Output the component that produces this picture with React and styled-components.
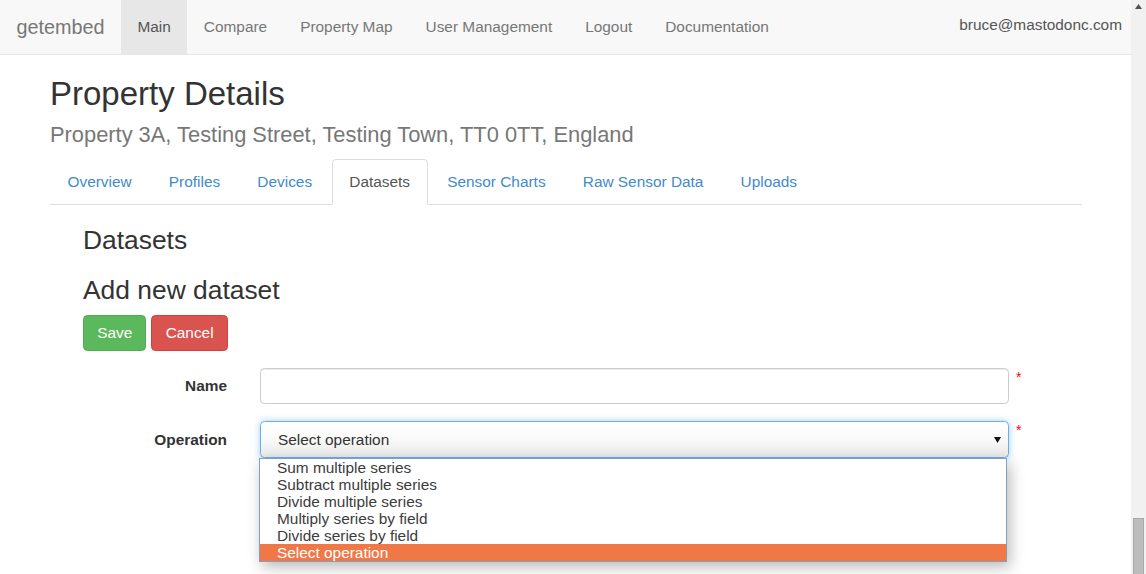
import styled, { createGlobalStyle } from 'styled-components'

const GlobalStyle = createGlobalStyle`
  html, body {
    margin: 0;
    padding: 0;
    background: #fff;
  }
  body {
    font-family: "Liberation Sans", Arial, Helvetica, sans-serif;
    font-size: 15.4px;
    color: #333;
  }
  * {
    box-sizing: border-box;
  }
`

const navItems = ['Main', 'Compare', 'Property Map', 'User Management', 'Logout', 'Documentation']
const tabs = ['Overview', 'Profiles', 'Devices', 'Datasets', 'Sensor Charts', 'Raw Sensor Data', 'Uploads']
const operations = [
  'Sum multiple series',
  'Subtract multiple series',
  'Divide multiple series',
  'Multiply series by field',
  'Divide series by field',
  'Select operation'
]

export default function App() {
  return (
    <>
      <GlobalStyle />
      <Screen>
        <Page>
          <Navbar>
            <Brand>getembed</Brand>
            <NavList>
              {navItems.map((item) => (
                <NavItem key={item} $active={item === 'Main'}>
                  {item}
                </NavItem>
              ))}
            </NavList>
            <NavUser>bruce@mastodonc.com</NavUser>
          </Navbar>

          <Content>
            <Title>Property Details</Title>
            <Address>Property 3A, Testing Street, Testing Town, TT0 0TT, England</Address>

            <TabBar>
              {tabs.map((tab) => (
                <Tab key={tab} $active={tab === 'Datasets'}>
                  {tab}
                </Tab>
              ))}
            </TabBar>

            <TabPane>
              <Heading>Datasets</Heading>
              <Heading>Add new dataset</Heading>
              <ButtonRow>
                <Button $variant="success">Save</Button>
                <Button $variant="danger">Cancel</Button>
              </ButtonRow>

              <Form>
                <FormRow>
                  <Label>Name</Label>
                  <Input type="text" />
                  <Required>*</Required>
                </FormRow>
                <FormRow>
                  <Label>Operation</Label>
                  <SelectWrap>
                    <SelectBox>
                      <span>Select operation</span>
                      <svg width="7" height="6" viewBox="0 0 7 6">
                        <polygon points="0,0 7,0 3.5,6" fill="#111" />
                      </svg>
                    </SelectBox>
                    <Dropdown>
                      {operations.map((op, i) => (
                        <Option key={op + i} $selected={i === operations.length - 1}>
                          {op}
                        </Option>
                      ))}
                    </Dropdown>
                  </SelectWrap>
                  <Required>*</Required>
                </FormRow>
              </Form>
            </TabPane>
          </Content>
        </Page>

        <Scrollbar>
          <ScrollArrow>
            <svg width="7" height="5" viewBox="0 0 7 5">
              <polygon points="0,5 7,5 3.5,0" fill="#505050" />
            </svg>
          </ScrollArrow>
          <ScrollTrack />
          <ScrollThumb />
        </Scrollbar>
      </Screen>
    </>
  )
}

const Screen = styled.div`
  display: flex;
  width: 1146px;
  height: 574px;
  overflow: hidden;
`

const Page = styled.div`
  flex: 1;
  display: flex;
  flex-direction: column;
  min-width: 0;
`

const Navbar = styled.nav`
  display: flex;
  align-items: stretch;
  height: 55px;
  background: #f8f8f8;
  border-bottom: 1px solid #e7e7e7;
  padding-right: 9px;
`

const Brand = styled.div`
  display: flex;
  align-items: center;
  padding: 0 16.5px;
  font-size: 19.8px;
  color: #777;
`

const NavList = styled.ul`
  display: flex;
  margin: 0;
  padding: 0;
  list-style: none;
`

const NavItem = styled.li`
  display: flex;
  align-items: center;
  padding: 0 16.5px;
  color: ${({ $active }) => ($active ? '#555' : '#777')};
  background: ${({ $active }) => ($active ? '#e7e7e7' : 'transparent')};
`

const NavUser = styled.div`
  margin-left: auto;
  display: flex;
  align-items: center;
  padding-bottom: 4px;
  color: #555;
`

const Content = styled.main`
  padding: 0 49px 0 50px;
`

const Title = styled.h1`
  margin: 21px 0 0;
  font-size: 33px;
  line-height: 1.1;
  font-weight: 500;
  color: #333;
`

const Address = styled.h3`
  margin: 11px 0 0;
  font-size: 21.85px;
  line-height: 1.1;
  font-weight: 400;
  color: #777;
`

const TabBar = styled.ul`
  display: flex;
  margin: 12px 0 0;
  padding: 0;
  list-style: none;
  border-bottom: 1px solid #ddd;
`

const Tab = styled.li`
  margin: 0 2.2px -1px 0;
  padding: 11px 16.5px;
  line-height: 22px;
  border: 1px solid ${({ $active }) => ($active ? '#ddd' : 'transparent')};
  border-bottom-color: ${({ $active }) => ($active ? '#fff' : 'transparent')};
  border-radius: 4.4px 4.4px 0 0;
  background: ${({ $active }) => ($active ? '#fff' : 'transparent')};
  color: ${({ $active }) => ($active ? '#555' : '#428bca')};
`

const TabPane = styled.section`
  padding: 0 0 0 33px;
`

const Heading = styled.h3`
  margin: 21px 0 0;
  font-size: 26.4px;
  line-height: 1.1;
  font-weight: 500;
  color: #333;
`

const ButtonRow = styled.div`
  display: flex;
  gap: 5px;
  margin-top: 10px;
`

const Button = styled.button`
  height: 36px;
  padding: 0 13.2px;
  font-family: inherit;
  font-size: 15.4px;
  color: #fff;
  border-radius: 4.4px;
  border: 1px solid ${({ $variant }) => ($variant === 'success' ? '#4cae4c' : '#d43f3a')};
  background: ${({ $variant }) => ($variant === 'success' ? '#5cb85c' : '#d9534f')};
`

const Form = styled.form`
  display: flex;
  flex-direction: column;
  gap: 17px;
  margin-top: 17px;
`

const FormRow = styled.div`
  display: grid;
  grid-template-columns: 144px 749px 20px;
  column-gap: 33px;
  align-items: center;
`

const Label = styled.label`
  text-align: right;
  font-weight: 700;
  color: #333;
`

const Input = styled.input`
  height: 36px;
  width: 100%;
  border: 1px solid #ccc;
  border-radius: 4.4px;
  box-shadow: inset 0 1px 1px rgba(0, 0, 0, 0.075);
  background: #fff;
`

const Required = styled.span`
  align-self: start;
  margin: 2px 0 0 -26px;
  color: #f00;
  font-size: 14px;
  line-height: 14px;
`

const SelectWrap = styled.div`
  position: relative;
`

const SelectBox = styled.div`
  display: flex;
  align-items: center;
  justify-content: space-between;
  height: 37px;
  padding: 0 7px 0 17px;
  border: 1px solid #66afe9;
  border-radius: 4.4px;
  background: linear-gradient(to bottom, #fff 0%, #fbfbfb 45%, #e9e9e9 100%);
  box-shadow: 0 0 7px rgba(102, 175, 233, 0.6);
  font-size: 15.4px;
  color: #333;

  svg {
    margin-top: 1px;
  }
`

const Dropdown = styled.ul`
  position: absolute;
  top: 100%;
  left: -1px;
  width: 748px;
  margin: 0;
  padding: 0;
  list-style: none;
  background: #fff;
  border: 1px solid #7f9fc3;
  box-shadow: 3px 5px 14px rgba(0, 0, 0, 0.28);
  z-index: 10;
`

const Option = styled.li`
  height: 17px;
  padding-left: 17px;
  font-size: 15.4px;
  line-height: 17px;
  color: ${({ $selected }) => ($selected ? '#fff' : '#3c3c3c')};
  background: ${({ $selected }) => ($selected ? '#f07746' : 'transparent')};
`

const Scrollbar = styled.div`
  width: 15px;
  display: flex;
  flex-direction: column;
  background: #f1f1f1;
`

const ScrollArrow = styled.div`
  height: 15px;
  display: flex;
  align-items: center;
  justify-content: center;
  padding-bottom: 2px;
`

const ScrollTrack = styled.div`
  flex: 1;
`

const ScrollThumb = styled.div`
  height: 56px;
  margin: 0 2px;
  background: #bcbcbc;
  border: 1px solid #aaa;
  border-bottom: none;
`
